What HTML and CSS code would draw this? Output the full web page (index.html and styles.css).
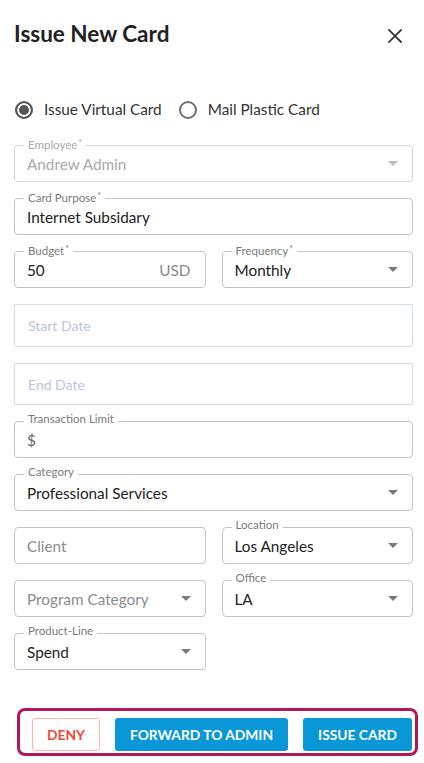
FILE: index.html
```html
<!DOCTYPE html>
<html>
<head>
  <title>Issue New Card</title>
  <link rel="stylesheet" href="styles.css">
</head>
<body>

  <div class="dialog">
    <div class="dialog-head">
      <h2 class="dialog-title">Issue New Card</h2>
      <button class="close-btn" aria-label="Close">
        <svg width="14" height="14" viewBox="0 0 14 14"><path d="M1 1L13 13M13 1L1 13" stroke="#3a3a3a" stroke-width="1.8" stroke-linecap="square"/></svg>
      </button>
    </div>

    <div class="card-type">
      <label class="radio"><span class="radio-dot checked"></span>Issue Virtual Card</label>
      <label class="radio"><span class="radio-dot"></span>Mail Plastic Card</label>
    </div>

    <div class="form">
      <div class="field disabled">
        <span class="float-label">Employee<span class="req">*</span></span>
        <span class="value">Andrew Admin</span>
        <svg class="caret" viewBox="0 0 10 5"><path d="M0 0L10 0L5 5Z"/></svg>
      </div>

      <div class="field">
        <span class="float-label">Card Purpose<span class="req">*</span></span>
        <span class="value">Internet Subsidary</span>
      </div>

      <div class="row">
        <div class="field">
          <span class="float-label">Budget<span class="req">*</span></span>
          <span class="value">50</span>
          <span class="unit">USD</span>
        </div>
        <div class="field">
          <span class="float-label">Frequency<span class="req">*</span></span>
          <span class="value">Monthly</span>
          <svg class="caret" viewBox="0 0 10 5"><path d="M0 0L10 0L5 5Z"/></svg>
        </div>
      </div>

      <div class="field date start">
        <span class="value">Start Date</span>
      </div>

      <div class="field date">
        <span class="value">End Date</span>
      </div>

      <div class="field">
        <span class="float-label">Transaction Limit</span>
        <span class="value money">$</span>
      </div>

      <div class="field">
        <span class="float-label">Category</span>
        <span class="value">Professional Services</span>
        <svg class="caret" viewBox="0 0 10 5"><path d="M0 0L10 0L5 5Z"/></svg>
      </div>

      <div class="row">
        <div class="field">
          <span class="value placeholder">Client</span>
        </div>
        <div class="field">
          <span class="float-label">Location</span>
          <span class="value">Los Angeles</span>
          <svg class="caret" viewBox="0 0 10 5"><path d="M0 0L10 0L5 5Z"/></svg>
        </div>
      </div>

      <div class="row">
        <div class="field">
          <span class="value placeholder">Program Category</span>
          <svg class="caret" viewBox="0 0 10 5"><path d="M0 0L10 0L5 5Z"/></svg>
        </div>
        <div class="field">
          <span class="float-label">Office</span>
          <span class="value">LA</span>
          <svg class="caret" viewBox="0 0 10 5"><path d="M0 0L10 0L5 5Z"/></svg>
        </div>
      </div>

      <div class="row">
        <div class="field">
          <span class="float-label">Product-Line</span>
          <span class="value">Spend</span>
          <svg class="caret" viewBox="0 0 10 5"><path d="M0 0L10 0L5 5Z"/></svg>
        </div>
      </div>
    </div>

    <div class="actions">
      <button class="btn btn-deny">Deny</button>
      <button class="btn btn-primary">Forward to Admin</button>
      <button class="btn btn-primary">Issue Card</button>
    </div>
  </div>

</body>
</html>
```

FILE: styles.css
```css
body {
  margin: 0;
  font-family: Lato, "Open Sans", sans-serif;
  background-color: #ffffff;
  color: #222222;
}

.dialog {
  padding: 20px 11px 0 14px;
}

/* header */
.dialog-head {
  display: flex;
  justify-content: space-between;
  align-items: center;
  height: 27px;
}

.dialog-title {
  margin: 0;
  font-size: 22.5px;
  font-weight: 700;
  line-height: 28px;
  color: #222222;
}

.close-btn {
  background: none;
  border: none;
  padding: 0;
  margin: 4px 11px 0 0;
  width: 14px;
  height: 14px;
  cursor: pointer;
}

.close-btn svg {
  display: block;
}

/* virtual / plastic choice */
.card-type {
  display: flex;
  gap: 16px;
  margin-top: 52px;
}

.radio {
  display: flex;
  align-items: flex-start;
  font-size: 15.3px;
  line-height: 20px;
  color: #333333;
}

.radio-dot {
  width: 18px;
  height: 18px;
  box-sizing: border-box;
  border: 2px solid #707070;
  border-radius: 50%;
  margin: 2px 11px 0 1px;
}

.radio-dot.checked {
  border-color: #555555;
  background-color: #555555;
  box-shadow: inset 0 0 0 2px #ffffff;
}

/* form fields */
.form {
  display: flex;
  flex-direction: column;
  gap: 16px;
  margin-top: 26px;
}

.row {
  display: grid;
  grid-template-columns: 1fr 1fr;
  gap: 16px;
}

.field {
  position: relative;
  display: flex;
  align-items: center;
  height: 37px;
  box-sizing: border-box;
  border: 1px solid #c4c4c4;
  border-radius: 4px;
  padding: 0 14px 0 12px;
  font-size: 15.3px;
}

.field .value {
  flex: 1;
  white-space: nowrap;
}

.float-label {
  position: absolute;
  top: -9px;
  left: 9px;
  padding: 0 4px;
  background-color: #ffffff;
  font-size: 11.5px;
  line-height: 12px;
  color: #7a7a7a;
}

.float-label .req {
  font-size: 9px;
  vertical-align: 3px;
  margin-left: 1px;
}

.field .unit {
  color: #8a8a8a;
}

.field .money {
  color: #666666;
}

.field .placeholder {
  color: #8c8c8c;
}

.caret {
  width: 10px;
  height: 5px;
  fill: #7a7a7a;
}

.field.disabled {
  border-color: #d4d4d4;
}

.field.disabled .float-label {
  color: #a9a9a9;
}

.field.disabled .value {
  color: #a9a9a9;
}

.field.disabled .caret {
  fill: #bdbdbd;
}

.field.date {
  height: 42px;
  border-color: #d3dcea;
  border-radius: 1px;
  padding-left: 13px;
  font-size: 14px;
  color: #b9c5d9;
}

.field.date.start {
  height: 43px;
}

/* footer buttons */
.actions {
  display: flex;
  gap: 15px;
  margin: 38px -5px 0 3px;
  padding: 7px 2px 2px 12px;
  border: 3px solid #b3175a;
  border-radius: 8px;
}

.btn {
  height: 33px;
  padding: 0 15px;
  font-family: Lato, "Open Sans", sans-serif;
  font-size: 13.8px;
  font-weight: 700;
  text-transform: uppercase;
  white-space: nowrap;
  border-radius: 3px;
  cursor: pointer;
}

.btn-deny {
  padding: 0 14px;
  background-color: #ffffff;
  color: #f0453a;
  border: 1px solid #ffb5ae;
}

.btn-primary {
  background-color: #0997d8;
  color: #ffffff;
  border: none;
}
```
